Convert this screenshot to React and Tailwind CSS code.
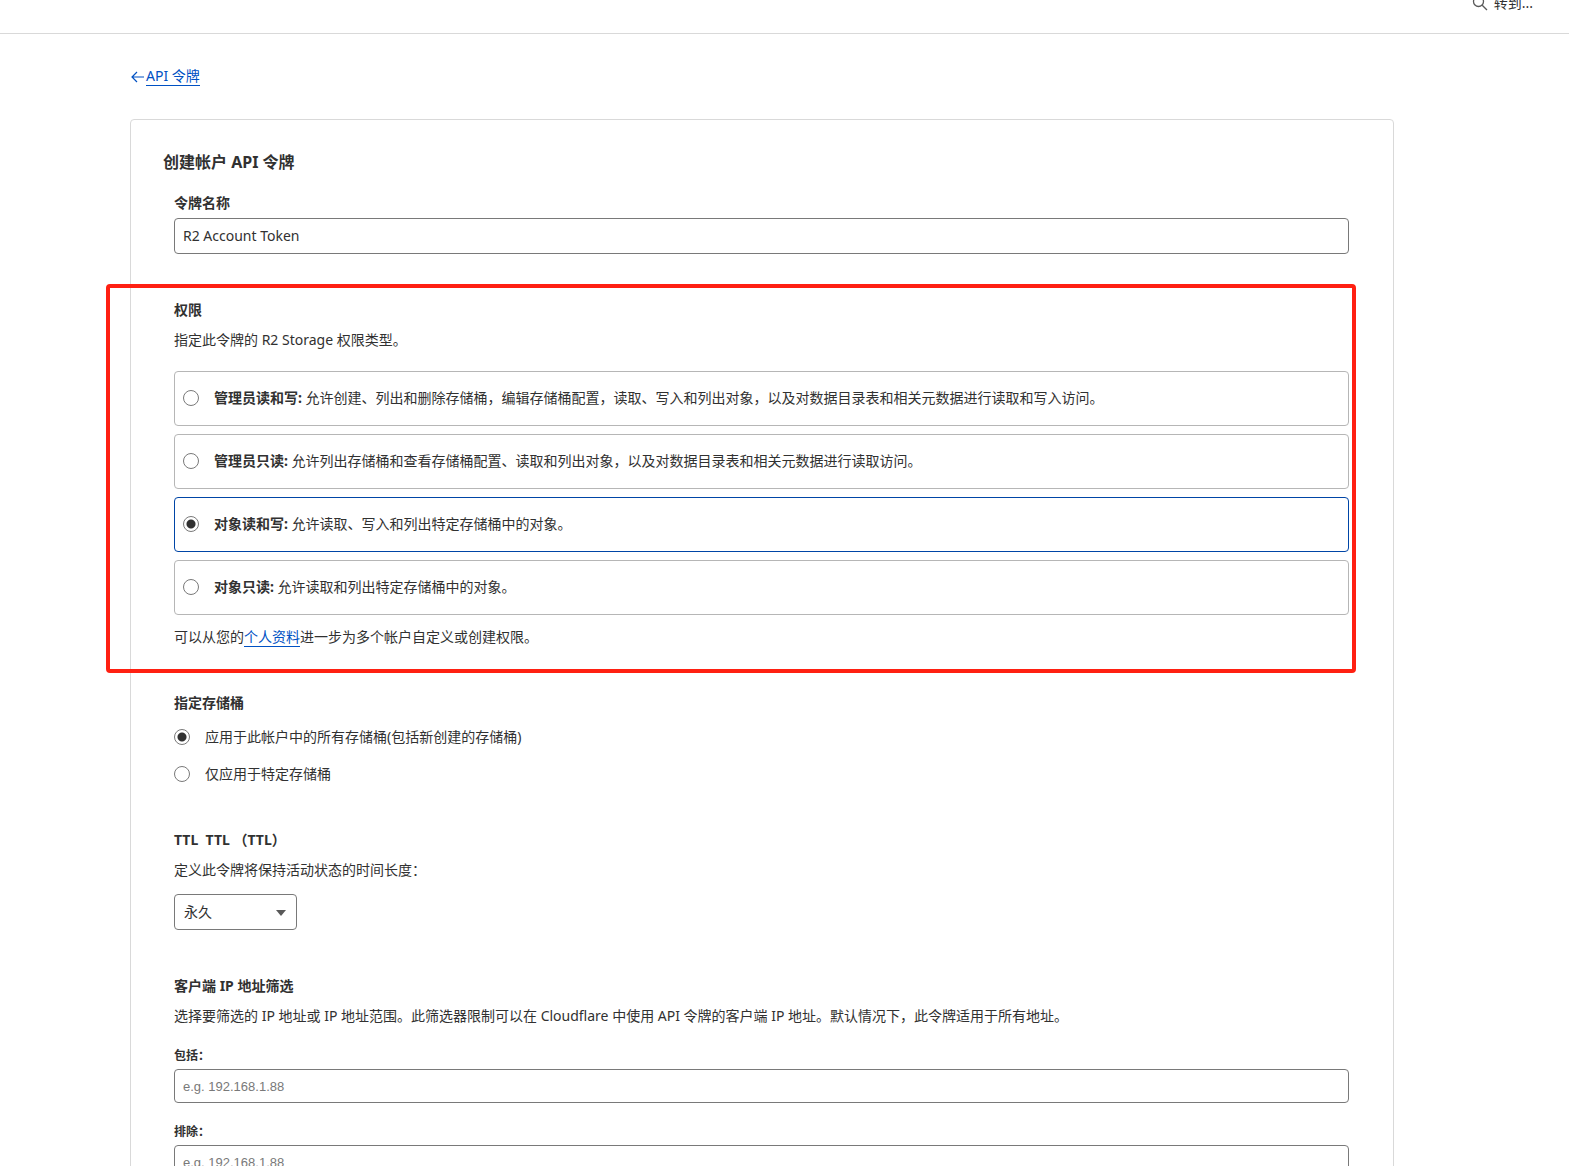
import { useState } from "react";

const permissions = [
  {
    value: "admin-rw",
    name: "管理员读和写:",
    text: "允许创建、列出和删除存储桶，编辑存储桶配置，读取、写入和列出对象，以及对数据目录表和相关元数据进行读取和写入访问。",
  },
  {
    value: "admin-ro",
    name: "管理员只读:",
    text: "允许列出存储桶和查看存储桶配置、读取和列出对象，以及对数据目录表和相关元数据进行读取访问。",
  },
  {
    value: "object-rw",
    name: "对象读和写:",
    text: "允许读取、写入和列出特定存储桶中的对象。",
  },
  {
    value: "object-ro",
    name: "对象只读:",
    text: "允许读取和列出特定存储桶中的对象。",
  },
];

const buckets = [
  { value: "all", text: "应用于此帐户中的所有存储桶(包括新创建的存储桶)" },
  { value: "some", text: "仅应用于特定存储桶" },
];

function Radio(props) {
  return (
    <input
      type="radio"
      className="size-4 shrink-0 appearance-none rounded-full border border-[#797979] bg-white checked:bg-[radial-gradient(circle,#313131_4px,transparent_5px)]"
      {...props}
    />
  );
}

function Section({ title, children }) {
  return (
    <section className="relative mt-[46px]">
      <h2 className="font-bold whitespace-pre">{title}</h2>
      {children}
    </section>
  );
}

function IpField({ id, label, className }) {
  return (
    <div className={className}>
      <label htmlFor={id} className="block text-xs leading-4 font-bold">
        {label}
      </label>
      <input
        id={id}
        type="text"
        placeholder="e.g. 192.168.1.88"
        className="mt-[5px] block h-[34px] w-full rounded border border-[#797979] px-2 font-['Liberation_Sans',sans-serif] text-[13px] placeholder:text-[#797979]"
      />
    </div>
  );
}

export default function App() {
  const [name, setName] = useState("R2 Account Token");
  const [permission, setPermission] = useState("object-rw");
  const [bucket, setBucket] = useState("all");

  return (
    <div
      lang="zh-CN"
      className="h-screen overflow-hidden bg-white font-['Noto_Sans','Noto_Sans_CJK_SC',sans-serif] text-sm leading-5 text-[#313131]"
    >
      <header className="flex h-[34px] items-start justify-end overflow-hidden border-b border-[#d9d9d9] pr-9">
        <button type="button" className="-mt-[7px] flex items-center gap-1.5">
          <svg
            viewBox="0 0 16 16"
            className="size-4"
            fill="none"
            stroke="#595959"
            strokeWidth="1.3"
          >
            <circle cx="6.5" cy="6.5" r="5" />
            <path d="M10.2 10.2 15 15" />
          </svg>
          转到...
        </button>
      </header>

      <main className="pt-[33px] pr-[175px] pl-[130px]">
        <a href="#tokens" className="flex items-center gap-0.5 leading-[18px] text-[#0051c3]">
          <svg
            viewBox="0 0 14 14"
            className="size-3.5"
            fill="none"
            stroke="currentColor"
            strokeWidth="1.2"
          >
            <path d="M14 7H2M7 2L2 7l5 5" />
          </svg>
          <span className="border-b border-[#0051c3]">API 令牌</span>
        </a>

        <div className="mt-[33px] rounded border border-[#d9d9d9] px-8 pt-[30px] pb-8">
          <h1 className="text-base leading-6 font-bold">创建帐户 API 令牌</h1>

          <form className="mt-[19px] pr-3 pl-[11px]">
            <label htmlFor="token-name" className="block font-bold">
              令牌名称
            </label>
            <input
              id="token-name"
              type="text"
              value={name}
              onChange={(e) => setName(e.target.value)}
              className="mt-[5px] block h-9 w-full rounded border border-[#797979] px-2 pb-0.5"
            />

            <Section title="权限">
              <p className="mt-2.5">指定此令牌的 R2 Storage 权限类型。</p>
              <div className="mt-[21px] flex flex-col gap-2">
                {permissions.map((p) => (
                  <label
                    key={p.value}
                    className={`flex h-[55px] items-center gap-[15px] rounded border px-2 pb-0.5 ${
                      permission === p.value ? "border-[#0045a6]" : "border-[#b6b6b6]"
                    }`}
                  >
                    <Radio
                      name="permission"
                      value={p.value}
                      checked={permission === p.value}
                      onChange={() => setPermission(p.value)}
                    />
                    <span>
                      <strong className="font-bold">{p.name}</strong> {p.text}
                    </span>
                  </label>
                ))}
              </div>
              <p className="mt-3">
                可以从您的
                <a href="#profile" className="border-b border-[#0051c3] text-[#0051c3]">
                  个人资料
                </a>
                进一步为多个帐户自定义或创建权限。
              </p>
              <div className="pointer-events-none absolute -top-4 -right-[7px] -bottom-[26px] -left-[68px] rounded border-4 border-[#ff2012]" />
            </Section>

            <Section title="指定存储桶">
              <div className="mt-3.5 flex flex-col gap-[17px]">
                {buckets.map((b) => (
                  <label key={b.value} className="flex items-center gap-[15px]">
                    <Radio
                      name="bucket"
                      value={b.value}
                      checked={bucket === b.value}
                      onChange={() => setBucket(b.value)}
                    />
                    {b.text}
                  </label>
                ))}
              </div>
            </Section>

            <Section title="TTL  TTL （TTL）">
              <label htmlFor="ttl" className="mt-2.5 block">
                定义此令牌将保持活动状态的时间长度：
              </label>
              <div className="relative mt-3.5 w-[123px]">
                <select
                  id="ttl"
                  className="block h-9 w-full appearance-none rounded border border-[#797979] bg-white px-[9px]"
                >
                  <option>永久</option>
                </select>
                <svg
                  viewBox="0 0 10 6"
                  className="pointer-events-none absolute top-4 right-[11px] h-1.5 w-2.5"
                  fill="#595959"
                >
                  <path d="M0 0h10L5 6z" />
                </svg>
              </div>
            </Section>

            <Section title="客户端 IP 地址筛选">
              <p className="mt-2.5">
                选择要筛选的 IP 地址或 IP 地址范围。此筛选器限制可以在 Cloudflare 中使用 API
                令牌的客户端 IP 地址。默认情况下，此令牌适用于所有地址。
              </p>
              <IpField id="ip-include" label="包括：" className="mt-[22px]" />
              <IpField id="ip-exclude" label="排除：" className="mt-[21px]" />
            </Section>
          </form>
        </div>
      </main>
    </div>
  );
}
